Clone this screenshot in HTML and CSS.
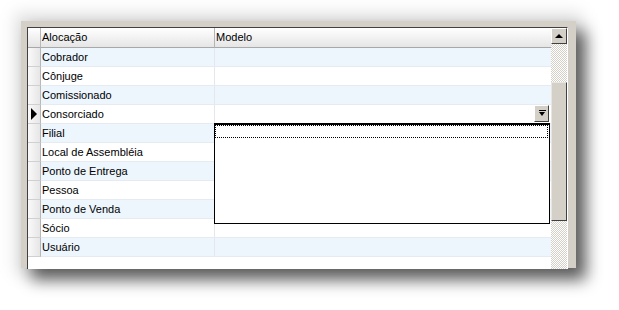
FILE: index.html
```
<!DOCTYPE html>
<html>
<head>
  <meta charset="utf-8">
  <title>Alocação</title>
  <link rel="stylesheet" href="styles.css">
</head>
<body>
  <div class="frame">
    <div class="grid">
      <div class="table">
        <div class="row head">
          <div class="ind"></div>
          <div class="cell">Alocação</div>
          <div class="cell">Modelo</div>
        </div>
        <div class="row alt"><div class="ind"></div><div class="cell">Cobrador</div><div class="cell"></div></div>
        <div class="row"><div class="ind"></div><div class="cell">Cônjuge</div><div class="cell"></div></div>
        <div class="row alt"><div class="ind"></div><div class="cell">Comissionado</div><div class="cell"></div></div>
        <div class="row current">
          <div class="ind"><span class="pointer"></span></div>
          <div class="cell">Consorciado</div>
          <div class="cell editor"><span class="dropbtn"><span class="down"></span></span></div>
        </div>
        <div class="row alt"><div class="ind"></div><div class="cell">Filial</div><div class="cell"></div></div>
        <div class="row"><div class="ind"></div><div class="cell">Local de Assembléia</div><div class="cell"></div></div>
        <div class="row alt"><div class="ind"></div><div class="cell">Ponto de Entrega</div><div class="cell"></div></div>
        <div class="row"><div class="ind"></div><div class="cell">Pessoa</div><div class="cell"></div></div>
        <div class="row alt"><div class="ind"></div><div class="cell">Ponto de Venda</div><div class="cell"></div></div>
        <div class="row"><div class="ind"></div><div class="cell">Sócio</div><div class="cell"></div></div>
        <div class="row alt"><div class="ind"></div><div class="cell">Usuário</div><div class="cell"></div></div>

        <!-- open combo list -->
        <div class="droplist">
          <div class="focus"></div>
        </div>
      </div>
      <div class="vscroll">
        <div class="btn"><span class="up"></span></div>
        <div class="track small"></div>
        <div class="thumb"></div>
        <div class="track"></div>
      </div>
    </div>
  </div>
</body>
</html>
```

FILE: styles.css
```
html, body { height: 100%; }
body { margin: 0; padding: 21px 0 0 21px; box-sizing: border-box; background: #fff;
       font-family: "Liberation Sans", Arial, sans-serif; font-size: 11px; color: #000; }

.frame { position: relative; width: 555px; height: 247px; box-sizing: border-box;
         padding: 6px 8px 0 6px; background: #d4d0c8; }
/* drop shadow drawn as blurred layers behind the frame */
.frame::before { content: ""; position: absolute; z-index: -1; left: 10px; top: 10px; right: -10px; bottom: -12px;
                 background: rgba(0,0,0,0.6); filter: blur(8px); }
.frame::after { content: ""; position: absolute; z-index: -2; left: -6px; top: -8px; right: -6px; bottom: -6px;
                background: rgba(0,0,0,0.12); filter: blur(8px); }
.grid { display: flex; height: 100%; border-top: 1px solid #404040; border-left: 1px solid #404040;
        border-right: 1px solid #fff; background: #fff; }
.table { position: relative; flex: 1; overflow: hidden; }

.row { display: grid; grid-template-columns: 13px 174px 1fr; height: 19px; line-height: 18px;
       background: #fff; }
.row.alt { background: #edf5fd; }
.row .cell { padding-left: 1px; border-bottom: 1px solid #e6ebf1; border-right: 1px solid #e4e8ec; white-space: nowrap; }
.row .cell:last-child { border-right: none; }
.ind { background: linear-gradient(to right, #fafafa, #e6e6e6); border-right: 1px solid #b8b8b8;
       border-bottom: 1px solid #d0d0d0; position: relative; }

.head { height: 20px; line-height: 19px; background: linear-gradient(#ffffff, #e4e4e4); }
.head .cell { border-bottom: 1px solid #a8a8a8; border-right: 1px solid #b4b4b4; }
.head .ind { background: linear-gradient(#ffffff, #e4e4e4); border-bottom: 1px solid #a8a8a8; }

.pointer { position: absolute; left: 3px; top: 3px; width: 0; height: 0;
           border-top: 6px solid transparent; border-bottom: 6px solid transparent; border-left: 6px solid #000; }

.editor { position: relative; }
.dropbtn { position: absolute; right: 2px; top: 0; width: 15px; height: 17px; box-sizing: border-box;
           background: #d4d0c8; border: 1px solid; border-color: #fff #404040 #404040 #fff; }
.down { position: absolute; left: 4px; top: 6px; width: 0; height: 0;
        border-left: 3px solid transparent; border-right: 3px solid transparent; border-top: 4px solid #000; }
.down::before { content: ""; position: absolute; left: -3px; top: -6px; width: 7px; height: 1px; background: #000; }

.droplist { position: absolute; left: 186px; top: 95px; width: 336px; height: 101px; box-sizing: border-box;
            background: #fff; border: 1px solid #000; border-top-width: 2px; }
.focus { height: 13px; border: 1px dotted #000; margin: 0 1px 0 0; box-sizing: border-box; }

.vscroll { width: 16px; display: flex; flex-direction: column; }
.btn { height: 16px; box-sizing: border-box; background: #d4d0c8; position: relative;
       border: 1px solid; border-color: #fff #404040 #404040 #fff; }
.up { position: absolute; left: 3px; top: 5px; width: 0; height: 0;
      border-left: 4px solid transparent; border-right: 4px solid transparent; border-bottom: 4px solid #000; }
.track { flex: 1; background: repeating-conic-gradient(#d4d0c8 0 25%, #fff 0 50%) 0 0 / 2px 2px; }
.track.small { flex: none; height: 38px; }
.thumb { height: 139px; box-sizing: border-box; background: #d4d0c8;
         border: 1px solid; border-color: #e8e6e0 #404040 #404040 #e8e6e0; }
```
